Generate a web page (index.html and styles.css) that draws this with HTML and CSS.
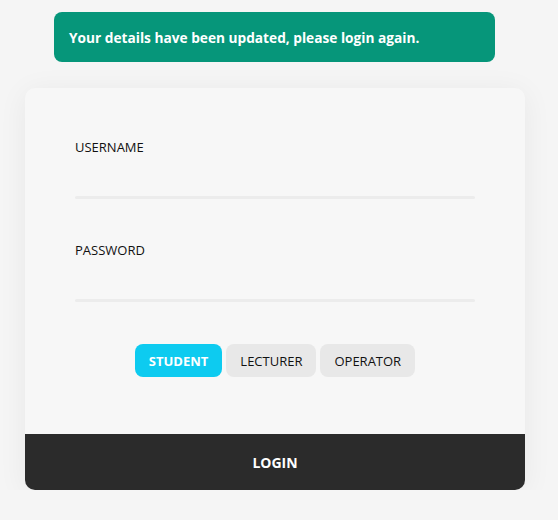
FILE: index.html
```html
<!DOCTYPE html>
<html>
<head>
<meta charset="utf-8">
<link rel="stylesheet" href="styles.css">
</head>
<body>
<div class="page">
  <div class="alert">Your details have been updated, please login again.</div>
  <form class="card">
    <div class="fields">
      <label class="field">
        <span class="label">USERNAME</span>
        <span class="line"></span>
      </label>
      <label class="field">
        <span class="label">PASSWORD</span>
        <span class="line"></span>
      </label>
      <div class="roles">
        <button type="button" class="role active">STUDENT</button>
        <button type="button" class="role">LECTURER</button>
        <button type="button" class="role">OPERATOR</button>
      </div>
    </div>
    <button type="button" class="login">LOGIN</button>
  </form>
</div>
</body>
</html>
```
FILE: styles.css
```css
html, body {
  margin: 0;
  padding: 0;
  background: #f5f5f5;
  font-family: "Open Sans", "Noto Sans", sans-serif;
}
.page {
  width: 500px;
  margin-left: 25px;
  padding-top: 12px;
  display: flex;
  flex-direction: column;
}
.alert {
  box-sizing: border-box;
  width: 441px;
  height: 50px;
  margin-left: 29px;
  background: #06967a;
  color: #fff;
  font-weight: 700;
  font-size: 13.7px;
  border-radius: 8px;
  padding-left: 15px;
  display: flex;
  align-items: center;
}
.card {
  margin: 26px 0 0;
  background: #f7f7f7;
  border-radius: 10px;
  box-shadow: 0 4px 30px rgba(0,0,0,0.06);
  overflow: hidden;
  display: flex;
  flex-direction: column;
}
.fields {
  padding: 51px 50px 57px;
  display: flex;
  flex-direction: column;
}
.field {
  display: flex;
  flex-direction: column;
  margin-bottom: 43px;
}
.field + .field {
  margin-bottom: 42px;
}
.label {
  font-size: 13px;
  color: #111;
  line-height: 16px;
}
.line {
  display: block;
  height: 3px;
  border-radius: 2px;
  background: #ececec;
  margin-top: 41px;
}
.roles {
  display: flex;
  justify-content: center;
  gap: 4px;
}
.role {
  border: none;
  font-family: inherit;
  font-size: 13px;
  height: 33px;
  padding: 0 14px;
  border-radius: 8px;
  background: #e8e8e8;
  color: #111;
}
.role.active {
  background: #0dcbf0;
  color: #fff;
  font-weight: 700;
}
.login {
  border: none;
  height: 56px;
  background: #2b2b2b;
  color: #fff;
  font-family: inherit;
  font-weight: 700;
  font-size: 14px;
}
```
